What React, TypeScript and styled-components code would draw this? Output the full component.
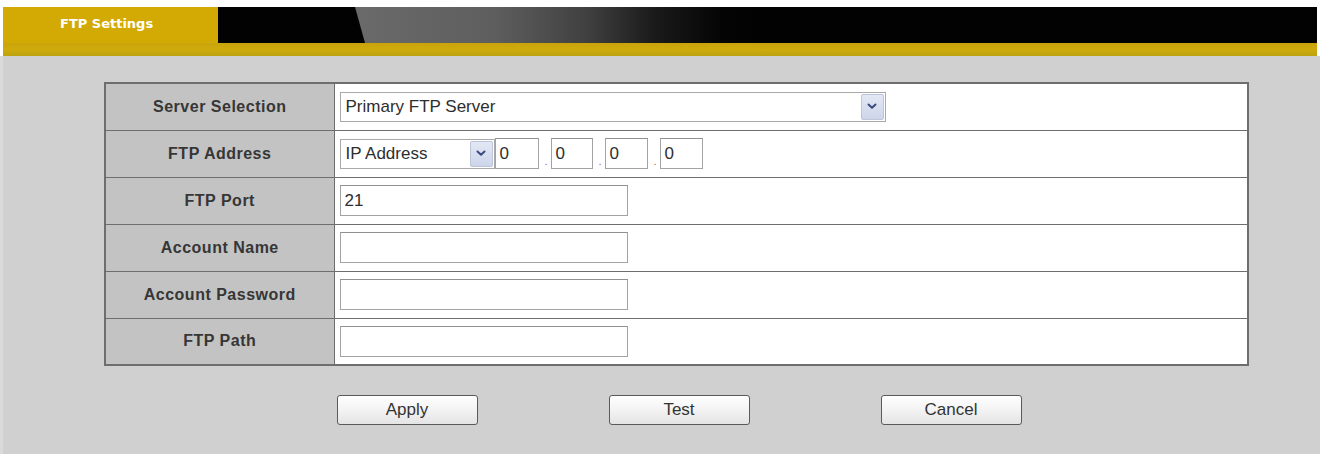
import React from "react";
import styled, { createGlobalStyle } from "styled-components";

const GlobalStyle = createGlobalStyle`
  html, body { margin: 0; padding: 0; background: #ffffff; }
  body { font-family: "Liberation Sans", Arial, sans-serif; }
  * { box-sizing: border-box; }
`;

const Page = styled.div`
  width: 1320px;
  height: 454px;
  background: #ffffff;
  padding-top: 7px;
  overflow: hidden;
  display: flex;
  flex-direction: column;
`;

const Header = styled.div`
  display: flex;
  height: 36px;
  margin: 0 3px;
`;

const Tab = styled.div`
  width: 215px;
  background: #d3aa03;
  color: #ffffff;
  font-family: "DejaVu Sans", Verdana, sans-serif;
  font-weight: bold;
  font-size: 13px;
  padding: 9px 0 0 57px;
`;

const Bar = styled.div`
  flex: 1;
  position: relative;
  background: #020202;
  &::before {
    content: "";
    position: absolute;
    top: 0;
    bottom: 0;
    left: 137px;
    width: 400px;
    clip-path: polygon(0 0, 100% 0, 100% 100%, 10px 100%);
    background: linear-gradient(
      to right,
      #6a6a6a 0%,
      #5e5e5e 35%,
      #404040 58%,
      #1a1a1a 75%,
      #040404 92%,
      #020202 100%
    );
  }
`;

const Stripe = styled.div`
  height: 13px;
  margin: 0 3px;
  background: linear-gradient(to bottom, #c9a40a 0%, #cfab0c 50%, #bca20e 100%);
`;

const Content = styled.div`
  flex: 1;
  background: #d0d0d0;
  border-left: 3px solid #dadada;
  padding: 26px 0 0 101px;
`;

const Table = styled.table`
  width: 1145px;
  border-collapse: collapse;
  border: 2px solid #6e6e6e;
`;

const Row = styled.tr`
  height: 47px;
`;

const Label = styled.td`
  width: 229px;
  background: #c3c3c3;
  border: 1.5px solid #6e6e6e;
  text-align: center;
  font-weight: bold;
  font-size: 16px;
  letter-spacing: 0.5px;
  color: #363636;
  padding: 0;
`;

const Value = styled.td`
  background: #ffffff;
  border: 1.5px solid #6e6e6e;
  padding: 0 0 0 5px;
`;

const Line = styled.div`
  display: flex;
  align-items: center;
`;

const Select = styled.div<{ $width: number }>`
  width: ${(p) => p.$width}px;
  height: 30px;
  display: flex;
  align-items: center;
  border: 1px solid #a9a9a9;
  background: #ffffff;
  padding: 1px;
  font-size: 17px;
  color: #2e2e2e;
`;

const SelectText = styled.span`
  flex: 1;
  padding-left: 4px;
`;

const Arrow = styled.span`
  width: 23px;
  height: 100%;
  display: flex;
  align-items: center;
  justify-content: center;
  background: linear-gradient(to bottom, #e3e8f4 0%, #cdd5ea 100%);
  border: 1px solid #bcc5dc;
  border-radius: 2px;
`;

const Field = styled.div<{ $width: number }>`
  width: ${(p) => p.$width}px;
  height: 31px;
  display: flex;
  align-items: center;
  border: 1px solid #a3a3a3;
  border-top-color: #8f8f8f;
  background: #ffffff;
  padding-left: 4px;
  font-size: 17px;
  color: #2e2e2e;
`;

const Dot = styled.span`
  width: 12px;
  align-self: flex-end;
  font-size: 11px;
  color: #7a7a7a;
  padding: 0 0 3px 6px;
  line-height: 10px;
`;

const Buttons = styled.div`
  width: 1145px;
  display: flex;
  justify-content: center;
  gap: 131px;
  margin-top: 29px;
  padding-left: 5px;
`;

const Button = styled.button`
  width: 141px;
  height: 30px;
  border: 1.5px solid #5a5a5a;
  border-radius: 3px;
  background: linear-gradient(to bottom, #ffffff 0%, #f3f3f3 50%, #e4e4e4 100%);
  font-family: "Liberation Sans", Arial, sans-serif;
  font-size: 17px;
  color: #333333;
  padding: 0;
`;

const Chevron = () => (
  <svg width="10" height="7" viewBox="0 0 10 7">
    <path d="M1.5 1.5 L5 4.8 L8.5 1.5" fill="none" stroke="#3a4c80" strokeWidth="2" strokeLinecap="round" strokeLinejoin="round" />
  </svg>
);

export default function App() {
  return (
    <>
      <GlobalStyle />
      <Page>
        <Header>
          <Tab>FTP Settings</Tab>
          <Bar />
        </Header>
        <Stripe />
        <Content>
          <Table>
            <tbody>
              <Row>
                <Label>Server Selection</Label>
                <Value>
                  <Select $width={546}>
                    <SelectText>Primary FTP Server</SelectText>
                    <Arrow>
                      <Chevron />
                    </Arrow>
                  </Select>
                </Value>
              </Row>
              <Row>
                <Label>FTP Address</Label>
                <Value>
                  <Line>
                    <Select $width={155}>
                      <SelectText>IP Address</SelectText>
                      <Arrow>
                        <Chevron />
                      </Arrow>
                    </Select>
                    <Field $width={44}>0</Field>
                    <Dot>.</Dot>
                    <Field $width={42}>0</Field>
                    <Dot>.</Dot>
                    <Field $width={43}>0</Field>
                    <Dot>.</Dot>
                    <Field $width={43}>0</Field>
                  </Line>
                </Value>
              </Row>
              <Row>
                <Label>FTP Port</Label>
                <Value>
                  <Field $width={288}>21</Field>
                </Value>
              </Row>
              <Row>
                <Label>Account Name</Label>
                <Value>
                  <Field $width={288} />
                </Value>
              </Row>
              <Row>
                <Label>Account Password</Label>
                <Value>
                  <Field $width={288} />
                </Value>
              </Row>
              <Row>
                <Label>FTP Path</Label>
                <Value>
                  <Field $width={288} />
                </Value>
              </Row>
            </tbody>
          </Table>
          <Buttons>
            <Button>Apply</Button>
            <Button>Test</Button>
            <Button>Cancel</Button>
          </Buttons>
        </Content>
      </Page>
    </>
  );
}
